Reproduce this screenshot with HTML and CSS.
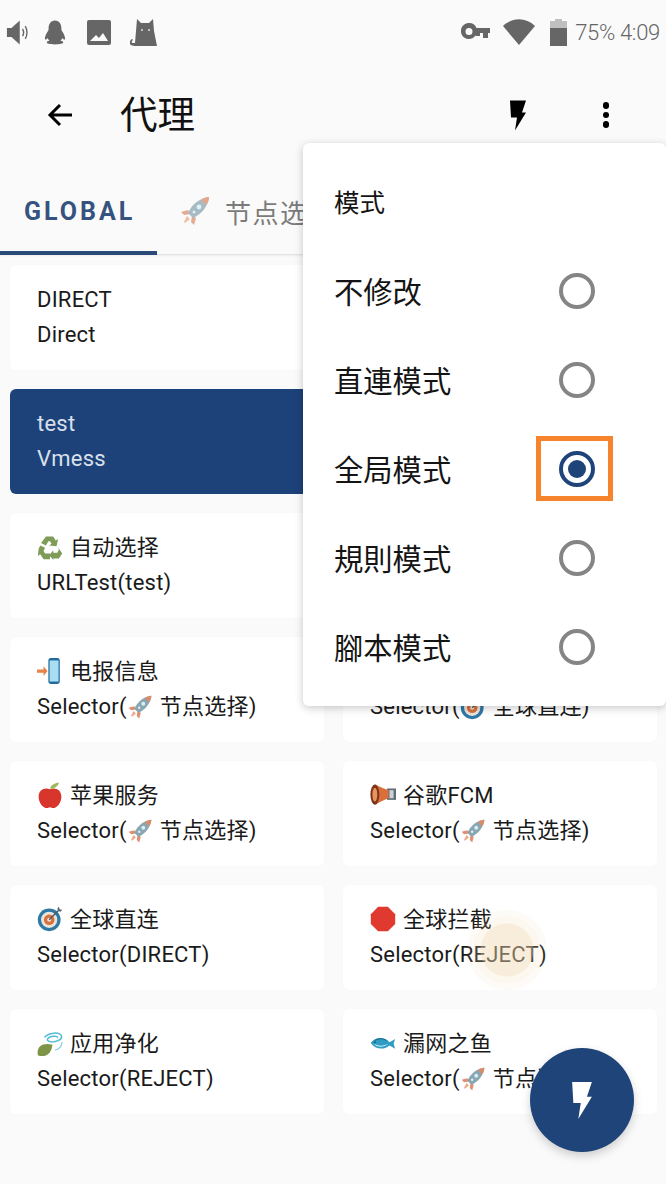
FILE: index.html
```html
<!DOCTYPE html>
<html lang="zh">
<head>
<meta charset="utf-8">
<title>代理</title>
<link rel="stylesheet" href="styles.css">
</head>
<body>
<svg class="defs" width="0" height="0" aria-hidden="true">
  <symbol id="rocket" viewBox="0 0 32 32">
    <path d="M9 15 2 17l3 3 6-1z" fill="#e08f70"/>
    <path d="M17 23l-2 7-3-3 1-6z" fill="#e08f70"/>
    <path d="M8 21l3 3-5 4-1-1z" fill="#eda887"/>
    <path d="M30 2C21 3 13 9 9 18l5 5c9-4 15-12 16-21z" fill="#8aa6b2"/>
    <path d="M30 2c-3 .3-6 1.300-8 3l5 5c2-2 3-5 3-8z" fill="#d98a68"/>
    <circle cx="20" cy="12" r="2.400" fill="#d8f0f5"/>
    <circle cx="15" cy="17" r="1.500" fill="#d8f0f5"/>
  </symbol>
  <symbol id="recycle" viewBox="0 0 32 32">
    <path d="M11 3h9l3 5 3-2-2 9-9-1 3-2-2-3h-2l-3 5-6-3z" fill="#7e9c58"/>
    <path d="M4 14l6 3-2 4 2 3h6v7H8l-4-6-3 2 1-9z" fill="#7e9c58"/>
    <path d="M25 15l6 9-4 6h-7v2l-5-6 5-6v3h5l2-4z" fill="#7e9c58"/>
  </symbol>
  <symbol id="phone" viewBox="0 0 32 32">
    <path d="M0 14h8v-4l5 6-5 6v-4H0z" fill="#e8824a"/>
    <rect x="14" y="0" width="14" height="32" rx="3" fill="#1f6a9a"/>
    <rect x="15.500" y="3" width="11" height="26" fill="#a9def2"/>
  </symbol>
  <symbol id="apple" viewBox="0 0 32 32">
    <path d="M16 9c6-3 14 0 14 9 0 8-6 14-10 14-2 0-2-1-4-1s-2 1-4 1c-4 0-10-6-10-14C2 9 10 6 16 9z" fill="#d8352c"/>
    <path d="M16 8c1-4 6-7 11-7-1 4-6 8-11 7z" fill="#9cb65a"/>
  </symbol>
  <symbol id="target" viewBox="0 0 32 32">
    <circle cx="15" cy="17" r="14" fill="#2f78a6"/>
    <circle cx="15" cy="17" r="10" fill="#e9e4dc"/>
    <circle cx="15" cy="17" r="6.500" fill="#d9703c"/>
    <circle cx="15" cy="17" r="2.500" fill="#efe5d8"/>
    <path d="M15 17 27 5" stroke="#4a5a66" stroke-width="1.800"/>
    <path d="M25 3l1 3 3 1 2-2-3-1-1-3z" fill="#5d6b75"/>
  </symbol>
  <symbol id="horn" viewBox="0 0 32 32">
    <rect x="21" y="8" width="11" height="14" fill="#5f6c74"/>
    <rect x="24" y="10" width="5" height="10" fill="#c8d2d8"/>
    <path d="M6 3c2 0 5 3 17 7v10C11 24 8 28 6 28z" fill="#d9703c"/>
    <ellipse cx="6" cy="15.500" rx="5.500" ry="12.500" fill="#7c3519"/>
    <ellipse cx="6" cy="15.500" rx="3" ry="8.500" fill="#e8945c"/>
  </symbol>
  <symbol id="stop" viewBox="0 0 32 32">
    <path d="M10 1h12l9 9v12l-9 9H10l-9-9V10z" fill="#e0392f"/>
  </symbol>
  <symbol id="leaf" viewBox="0 0 32 32">
    <path d="M1 31c-2-11 6-16 18-13-1 11-9 17-18 13z" fill="#7f9446"/>
    <path d="M9 9c6-6 18-7 21-2 2 5-8 9-15 7-4-1-2-5 3-6 5-1 8 0 7 2" fill="none" stroke="#54bcd8" stroke-width="1.800"/>
    <path d="M22 25c5-1 8-4 9-10" fill="none" stroke="#7fd0e6" stroke-width="1.400"/>
  </symbol>
  <symbol id="fish" viewBox="0 0 32 32">
    <path d="M1 16c5-8 17-8 23-1l7-4-2 6 2 6-7-4C18 25 6 24 1 16z" fill="#2f9cc4"/>
    <path d="M4 17c6 3 13 3 19 0-6 5-14 5-19 0z" fill="#d5eff7"/>
    <path d="M6 13c5-3 10-3 14 0" fill="none" stroke="#17607f" stroke-width="1.200"/>
    <circle cx="6" cy="15" r="1" fill="#0e3a4d"/>
  </symbol>
  <symbol id="bolt" viewBox="0 0 16 30">
    <path d="M0 0h16l-4 12h4L5 30l2-13H1z"/>
  </symbol>
</svg>

<div class="screen">
  <header class="status">
    <div class="status-left">
      <svg class="s-speaker" viewBox="0 0 24 28"><path d="M1 9h5l9-8v26l-9-8H1z"/><path d="M18 10c1.500 2.500 1.500 5.500 0 8M21 7c2.500 4 2.500 10 0 14" fill="none" stroke="#666" stroke-width="1.500"/></svg>
      <svg class="s-qq" viewBox="0 0 24 26"><path d="M12 0c5 0 7 4 7 9 0 1 0 2 1 3 2 3 3 6 3 8 0 1-1 1-2 0l-1-1c0 1-1 2-2 3 2 0 3 1 3 2s-3 2-9 2-9-1-9-2 1-2 3-2c-1-1-2-2-2-3l-1 1c-1 1-2 1-2 0 0-2 1-5 3-8 1-1 1-2 1-3 0-5 2-9 7-9z"/></svg>
      <svg class="s-pic" viewBox="0 0 24 25"><path fill-rule="evenodd" d="M2 0h20a2 2 0 0 1 2 2v21a2 2 0 0 1-2 2H2a2 2 0 0 1-2-2V2a2 2 0 0 1 2-2zM3 21h18l-5-8-4 5-3-3z"/></svg>
      <svg class="s-cat" viewBox="0 0 28 27"><path d="M7 0l4 4h8l4-4 1 12 3 15H9c-4 0-8 0-9-2-1-2 1-5 2-5s1 1 0 2c-1 2 1 2 3 2z"/><circle cx="12" cy="11" r="1" fill="#ddd"/><circle cx="19" cy="11" r="1" fill="#ddd"/></svg>
    </div>
    <div class="status-right">
      <svg class="s-key" viewBox="0 0 29 18"><path fill-rule="evenodd" d="M8 0a8 8 0 0 1 7.500 5H29v5h-2v5h-5v-5h-3v3h-4l-.500-.500A8 8 0 1 1 8 0zm0 5a3.500 3.500 0 1 0 0 7 3.500 3.500 0 0 0 0-7z"/></svg>
      <svg class="s-wifi" viewBox="0 0 32 26"><path d="M16 26 0 7c9-9 23-9 32 0z"/></svg>
      <svg class="s-batt" viewBox="0 0 17 27"><path d="M5 0h7v2h5v7H0V2h5z" opacity=".4"/><path d="M0 9h17v18H0z"/></svg>
      <span class="s-text">75% 4:09</span>
    </div>
  </header>

  <div class="appbar">
    <div class="appbar-start">
      <svg class="i-back" viewBox="0 0 26 24"><path d="M25 12H3M13 2 3 12l10 10" fill="none" stroke="#000" stroke-width="3"/></svg>
      <h1 class="title">代理</h1>
    </div>
    <div class="appbar-end">
      <svg class="i-bolt"><use href="#bolt"/></svg>
      <span class="i-dots"><i></i><i></i><i></i></span>
    </div>
  </div>

  <nav class="tabs">
    <span class="tab tab-active">GLOBAL</span>
    <span class="tab tab-idle"><svg class="tab-emo"><use href="#rocket"/></svg>节点选择</span>
  </nav>

  <main class="grid">
    <article class="card"><p>DIRECT</p><p>Direct</p></article>
    <article class="card"></article>
    <article class="card card-on"><p>test</p><p>Vmess</p></article>
    <article class="card"></article>
    <article class="card"><p><svg class="emo"><use href="#recycle"/></svg>自动选择</p><p>URLTest(test)</p></article>
    <article class="card"></article>
    <article class="card"><p><svg class="emo"><use href="#phone"/></svg>电报信息</p><p>Selector(<svg class="emo-in"><use href="#rocket"/></svg>节点选择)</p></article>
    <article class="card"><p>&nbsp;</p><p>Selector(<svg class="emo-in"><use href="#target"/></svg>全球直连)</p></article>
    <article class="card"><p><svg class="emo"><use href="#apple"/></svg>苹果服务</p><p>Selector(<svg class="emo-in"><use href="#rocket"/></svg>节点选择)</p></article>
    <article class="card"><p><svg class="emo"><use href="#horn"/></svg>谷歌FCM</p><p>Selector(<svg class="emo-in"><use href="#rocket"/></svg>节点选择)</p></article>
    <article class="card"><p><svg class="emo"><use href="#target"/></svg>全球直连</p><p>Selector(DIRECT)</p></article>
    <article class="card"><p><svg class="emo"><use href="#stop"/></svg>全球拦截</p><p>Selector(REJECT)</p></article>
    <article class="card"><p><svg class="emo"><use href="#leaf"/></svg>应用净化</p><p>Selector(REJECT)</p></article>
    <article class="card"><p><svg class="emo"><use href="#fish"/></svg>漏网之鱼</p><p>Selector(<svg class="emo-in"><use href="#rocket"/></svg>节点选择)</p></article>
  </main>

  <section class="menu">
    <div class="menu-head"><span class="menu-label">模式</span></div>
    <div class="menu-row"><span class="menu-label">不修改</span><span class="radio"></span></div>
    <div class="menu-row"><span class="menu-label">直連模式</span><span class="radio"></span></div>
    <div class="menu-row"><span class="menu-label">全局模式</span><span class="radio radio-on"><i class="radio-dot"></i><i class="mark"></i></span></div>
    <div class="menu-row"><span class="menu-label">規則模式</span><span class="radio"></span></div>
    <div class="menu-row"><span class="menu-label">腳本模式</span><span class="radio"></span></div>
  </section>

  <div class="touch"></div>
  <button class="fab" type="button"><svg class="fab-bolt"><use href="#bolt"/></svg></button>
</div>
</body>
</html>
```
FILE: styles.css
```css
* { box-sizing: border-box; }
html, body { margin: 0; padding: 0; }
body {
  width: 666px;
  height: 1184px;
  overflow: hidden;
  background: #fafafa;
  color: #1a1a1a;
  font-family: Roboto, "Noto Sans CJK SC", sans-serif;
}
.defs { position: absolute; }
.screen { position: relative; width: 666px; height: 1184px; overflow: hidden; }

/* status bar */
.status {
  height: 64px;
  display: flex;
  align-items: center;
  justify-content: space-between;
  padding: 0 6px;
  fill: #666;
  color: #666;
}
.status-left, .status-right { display: flex; align-items: center; }
.s-speaker { width: 22px; height: 27px; }
.s-qq { width: 22px; height: 25px; margin-left: 16px; }
.s-pic { width: 24px; height: 25px; margin-left: 21px; }
.s-cat { width: 28px; height: 27px; margin-left: 19px; }
.s-key { width: 29px; height: 18px; }
.s-wifi { width: 32px; height: 26px; margin-left: 13px; }
.s-batt { width: 17px; height: 27px; margin-left: 15px; }
.s-text { font-size: 22px; margin-left: 8px; font-weight: 300; letter-spacing: -.3px; }

/* app bar */
.appbar {
  height: 102px;
  display: flex;
  align-items: center;
  justify-content: space-between;
  padding: 0 57px 0 47px;
}
.appbar-start, .appbar-end { display: flex; align-items: center; }
.i-back { width: 26px; height: 24px; }
.title { margin: 2px 0 0 47px; font-size: 37.500px; font-weight: 400; color: #111; line-height: 1; }
.i-bolt { width: 16px; height: 31px; fill: #000; margin-right: 77px; }
.i-dots { display: flex; flex-direction: column; gap: 3px; }
.i-dots i { width: 6.500px; height: 6.500px; border-radius: 50%; background: #000; }

/* tabs */
.tabs {
  height: 89px;
  padding-top: 2px;
  display: flex;
  border-bottom: 1px solid #e4e4e4;
  box-shadow: 0 1px 2px rgba(0,0,0,.06);
}
.tab { display: flex; align-items: center; white-space: nowrap; }
.tab-active {
  width: 157px;
  margin-bottom: -1px;
  padding: 4px 0 0 24px;
  border-bottom: 4px solid #2a4a78;
  font-size: 25px;
  font-weight: 700;
  letter-spacing: 3px;
  color: #35537e;
}
.tab-idle { margin-left: 22px; font-size: 26px; color: #7b7b7b; letter-spacing: 1.500px; }
.tab-emo { width: 32px; height: 32px; margin-right: 14px; opacity: .75; }

/* proxy grid */
.grid {
  display: grid;
  grid-template-columns: 1fr 1fr;
  gap: 19px;
  padding: 10px 9px 0 10px;
}
.card {
  height: 105px;
  padding: 17px 27px 0;
  background: #fff;
  border-radius: 6px;
  box-shadow: 0 0 3px rgba(0,0,0,.02);
  font-size: 22px;
  letter-spacing: .22px;
  line-height: 35px;
  white-space: nowrap;
  overflow: hidden;
}
.card p { margin: 0; }
.card-on { background: #1d4179; color: #d8e0ec; }
.emo { width: 26px; height: 26px; margin-right: 7px; vertical-align: -5px; }
.emo-in { width: 26px; height: 26px; margin-right: 7px; vertical-align: -6px; }

/* popup menu */
.menu {
  position: absolute;
  top: 143px;
  left: 303px;
  right: 0;
  height: 563px;
  padding: 14px 71px 0 31px;
  background: #fff;
  border-radius: 6px;
  box-shadow: 0 2px 8px rgba(0,0,0,.22);
  color: #141414;
}
.menu-label { padding-bottom: 2px; }
.menu-head { height: 89px; display: flex; align-items: center; font-size: 25.500px; }
.menu-row {
  height: 89px;
  display: flex;
  align-items: center;
  justify-content: space-between;
  font-size: 29.300px;
}
.radio {
  position: relative;
  width: 36px;
  height: 36px;
  border: 4px solid #858585;
  border-radius: 50%;
  display: flex;
  align-items: center;
  justify-content: center;
}
.radio-on { border-color: #1f4479; }
.radio-dot { width: 18px; height: 18px; border-radius: 50%; background: #1f4479; }
.mark {
  position: absolute;
  top: -19px;
  left: -27px;
  width: 77px;
  height: 65px;
  border: 5px solid #f5842c;
}

/* touch indicator */
.touch {
  position: absolute;
  left: 467px;
  top: 910px;
  width: 80px;
  height: 80px;
  border-radius: 50%;
  background: radial-gradient(circle, rgba(240,215,175,.45) 0 26px, rgba(240,215,175,.2) 27px 33px, rgba(240,215,175,.1) 34px 40px);
}

/* floating button */
.fab {
  position: absolute;
  left: 530px;
  top: 1048px;
  width: 104px;
  height: 104px;
  padding: 0;
  border: 0;
  border-radius: 50%;
  background: #1f4479;
  fill: #fff;
  box-shadow: 0 4px 10px rgba(0,0,0,.18);
  display: flex;
  align-items: center;
  justify-content: center;
}
.fab-bolt { width: 20px; height: 37px; }
```
